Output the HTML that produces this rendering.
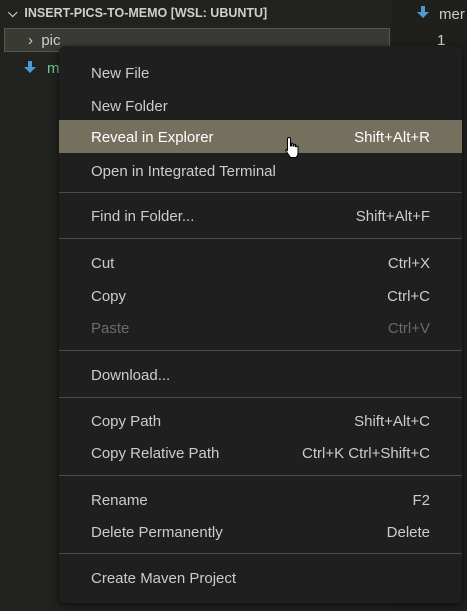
<!DOCTYPE html><html><head><style>
body{margin:0;width:467px;height:611px;background:#21221e;font-family:"Liberation Sans",sans-serif;overflow:hidden;position:relative}
.ed{position:absolute;left:392px;top:0;right:0;bottom:0;background:#1f1f1c}
.hdr{position:absolute;left:8px;top:6px;color:#cfcfcf;font-weight:bold;font-size:12.5px}
.sel{position:absolute;left:4px;top:28px;width:386px;height:24px;background:#393a33;border:1px solid #55564c;box-sizing:border-box}
.t{position:absolute;color:#cccccc;font-size:15px}
.menu{position:absolute;left:59px;top:46px;width:403px;height:557px;background:#1f1f1f;border-radius:6px;box-shadow:0 2px 8px rgba(0,0,0,.6)}
.r{position:absolute;left:0;right:0;height:33px;line-height:35px;color:#cccccc;font-size:15px}
.r span{position:absolute;left:32px}.r b{position:absolute;right:32px;font-weight:normal}
.hl{background:#756f5d;color:#fff}
.dis{color:#6b6b6b}
.s{position:absolute;left:0;right:0;height:1px;background:#4a4a4a}
</style></head><body>
<div class="ed"></div>
<div class="hdr">⌵&nbsp; INSERT-PICS-TO-MEMO [WSL: UBUNTU]</div>
<div class="sel"></div>
<div class="t" style="left:28px;top:32px">›&nbsp; pic</div>
<svg style="position:absolute;left:24px;top:61px" width="12" height="12"><path d="M4 0h4v6h4l-6 6-6-6h4z" fill="#4a9ad6"/></svg>
<div class="t" style="left:47px;top:60px;color:#73c991">m</div>
<svg style="position:absolute;left:417px;top:6px" width="12" height="12"><path d="M4 0h4v6h4l-6 6-6-6h4z" fill="#4a9ad6"/></svg>
<div class="t" style="left:439px;top:6px">mer</div>
<div class="t" style="left:437px;top:32px">1</div>
<div class="menu">
<div class="r" style="top:10px"><span>New File</span></div>
<div class="r" style="top:43px"><span>New Folder</span></div>
<div class="r hl" style="top:74px"><span>Reveal in Explorer</span><b>Shift+Alt+R</b></div>
<div class="r" style="top:108px"><span>Open in Integrated Terminal</span></div>
<div class="s" style="top:146px"></div>
<div class="r" style="top:153px"><span>Find in Folder...</span><b>Shift+Alt+F</b></div>
<div class="s" style="top:192px"></div>
<div class="r" style="top:200px"><span>Cut</span><b>Ctrl+X</b></div>
<div class="r" style="top:233px"><span>Copy</span><b>Ctrl+C</b></div>
<div class="r dis" style="top:265px"><span>Paste</span><b>Ctrl+V</b></div>
<div class="s" style="top:304px"></div>
<div class="r" style="top:312px"><span>Download...</span></div>
<div class="s" style="top:351px"></div>
<div class="r" style="top:358px"><span>Copy Path</span><b>Shift+Alt+C</b></div>
<div class="r" style="top:390px"><span>Copy Relative Path</span><b>Ctrl+K Ctrl+Shift+C</b></div>
<div class="s" style="top:429px"></div>
<div class="r" style="top:437px"><span>Rename</span><b>F2</b></div>
<div class="r" style="top:469px"><span>Delete Permanently</span><b>Delete</b></div>
<div class="s" style="top:507px"></div>
<div class="r" style="top:515px"><span>Create Maven Project</span></div>
</div>
<svg style="position:absolute;left:283px;top:136px" width="20" height="24" viewBox="0 0 20 24"><path d="M6 1.5c1 0 1.5.7 1.5 1.5v7l1-.2V8c0-1 1.5-1 1.5 0v2l1 .1V9c0-1 1.5-1 1.5 0v1.5l1 .2c0-1 1.5-1 1.5 0V17c0 2-1 3.5-2 4.5H7.5L3 15c-.8-1 .3-2.2 1.3-1.3L4.5 15V3c0-.8.5-1.5 1.5-1.5z" fill="#fff" stroke="#000" stroke-width="1"/></svg>
</body></html>
